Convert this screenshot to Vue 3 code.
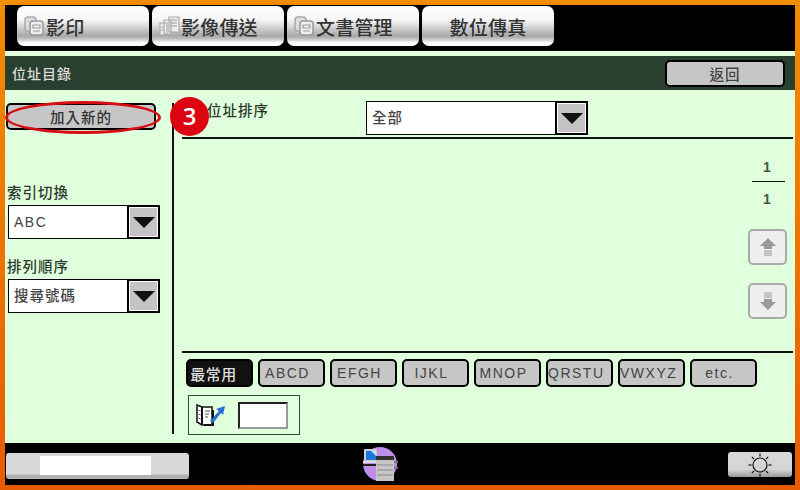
<script setup>
const tabs = [
  { label: '影印', icon: 'single' },
  { label: '影像傳送', icon: 'stack' },
  { label: '文書管理', icon: 'single' },
  { label: '數位傳真', icon: null }
]
const indexTabs = ['最常用', 'ABCD', 'EFGH', 'IJKL', 'MNOP', 'QRSTU', 'VWXYZ', 'etc.']
const rays = [0, 45, 90, 135, 180, 225, 270, 315]
</script>

<template>
  <div class="screen">
    <nav class="top-bar">
      <button v-for="tab in tabs" :key="tab.label" class="tab" :class="{ plain: !tab.icon }">
        <span v-if="tab.icon" class="tab-icon">
          <svg v-if="tab.icon === 'single'" width="20" height="20" viewBox="0 0 20 20">
            <rect x="1" y="1" width="11" height="14" rx="3" fill="#ddd" stroke="#aaa" stroke-width="1.5" />
            <rect x="6" y="5" width="13" height="14" rx="3" fill="#eee" stroke="#999" stroke-width="1.5" />
            <path d="M9 9h7v3H9zM9 15h7" fill="none" stroke="#999" stroke-width="1.2" />
          </svg>
          <svg v-else width="21" height="20" viewBox="0 0 21 20">
            <path d="M1 7h7v12H1zM5 4h7v14H5zM10 1h10v15H10z" fill="#eee" stroke="#aaa" stroke-width="1.2" />
            <path d="M12 4h6M12 7h6M12 10h6M2.500 11h2M2.500 14h2" stroke="#999" />
          </svg>
        </span>
        <span>{{ tab.label }}</span>
      </button>
    </nav>

    <div class="spacer"></div>

    <header class="title-bar">
      <h1>位址目錄</h1>
      <button class="btn back-btn">返回</button>
    </header>

    <div class="body">
      <aside class="side">
        <div class="add-wrap">
          <button class="btn add-btn">加入新的</button>
          <span class="oval"></span>
          <span class="badge">3</span>
        </div>

        <label class="field-label index-label">索引切換</label>
        <div class="select side-select">
          <span class="select-value latin">ABC</span>
          <span class="select-arrow"></span>
        </div>

        <label class="field-label order-label">排列順序</label>
        <div class="select side-select">
          <span class="select-value">搜尋號碼</span>
          <span class="select-arrow"></span>
        </div>
      </aside>

      <main class="main">
        <div class="filter-row">
          <span class="filter-label">位址排序</span>
          <div class="select filter-select">
            <span class="select-value">全部</span>
            <span class="select-arrow"></span>
          </div>
        </div>

        <div class="list-area">
          <div class="pager">
            <div class="page-count">
              <span class="page-num">1</span>
              <span class="page-num page-total">1</span>
            </div>
            <button class="page-btn">
              <svg width="16" height="18" viewBox="0 0 16 18">
                <path d="M8 0l8 8h-4v3H4V8H0z" fill="#999" />
                <path d="M4 13h8M4 15h8M4 17h8" stroke="#999" stroke-width="1.100" />
              </svg>
            </button>
            <button class="page-btn down">
              <svg width="16" height="18" viewBox="0 0 16 18">
                <path d="M8 18l8-8h-4V7H4v3H0z" fill="#999" />
                <path d="M4 1h8M4 3h8M4 5h8" stroke="#999" stroke-width="1.100" />
              </svg>
            </button>
          </div>
        </div>

        <div class="index-tabs">
          <button
            v-for="(item, i) in indexTabs"
            :key="item"
            class="btn index-tab"
            :class="{ active: i === 0 }"
          >{{ item }}</button>
        </div>

        <div class="goto">
          <svg width="32" height="22" viewBox="0 0 32 22">
            <path d="M2 1l5 2h10v18H7l-5-3z" fill="#fff" stroke="#111" stroke-width="1.500" />
            <path d="M7 3v18M9 21h9V6" fill="none" stroke="#111" stroke-width="2" />
            <path d="M3.500 6l2 1M3.500 10l2 1M3.500 14l2 1M10 7h5M10 10h4M10 13h3" stroke="#555" />
            <path d="M15 17l9-10-3-2 9-3-2 9-2-2-8 10z" fill="#2f6bd0" />
          </svg>
          <span class="goto-input"></span>
        </div>
      </main>
    </div>

    <footer class="footer">
      <div class="status-btn"><span class="status-text"></span></div>
      <svg class="machine" width="38" height="35" viewBox="0 0 38 35">
        <circle cx="18" cy="17" r="17" fill="#c08eea" />
        <path d="M2 2h13v12H2z" fill="#ccc" />
        <path d="M4 4h10v9H4z" fill="#1c76e0" />
        <path d="M9 4h5v5z" fill="#bfe0ff" />
        <path d="M1 14h15v2H1z" fill="#ddd" />
        <path d="M1 17h15v2H1z" fill="#222" />
        <path d="M14 9h18v25H14z" fill="#c6c6c6" />
        <path d="M14 9h18v4H14z" fill="#333" />
        <path d="M15 18h16M15 23h16M15 28h16" stroke="#888" />
        <path d="M32 14h4v2h-4zM32 20h4v2h-4z" fill="#777" />
      </svg>
      <button class="light-btn">
        <svg width="24" height="24" viewBox="0 0 24 24">
          <circle cx="12" cy="12" r="7" fill="none" stroke="#111" stroke-width="1.200" />
          <path
            v-for="deg in rays"
            :key="deg"
            d="M12 0.500v3"
            stroke="#111"
            stroke-width="1.200"
            :transform="`rotate(${deg} 12 12)`"
          />
        </svg>
      </button>
    </footer>
  </div>
</template>

<style>
html, body { margin: 0; background: #000; }
</style>

<style scoped>
.screen {
  width: 800px;
  height: 490px;
  box-sizing: border-box;
  padding: 5px;
  display: flex;
  flex-direction: column;
  background: linear-gradient(180deg, #f28c00 0%, #ee7400 50%, #e85c00 100%);
  font-family: "Liberation Sans", "Noto Sans CJK TC", sans-serif;
  color: #333;
  overflow: hidden;
}
button {
  font-family: inherit;
  padding: 0;
  cursor: pointer;
}

.top-bar {
  height: 46px;
  flex: none;
  box-sizing: border-box;
  background: #000;
  padding: 1px 0 0 12px;
  display: flex;
  gap: 3px;
}
.tab {
  width: 132px;
  height: 40px;
  box-sizing: border-box;
  padding-left: 7px;
  border: none;
  border-radius: 7px;
  background: linear-gradient(180deg, #fff 0%, #f6f6f6 35%, #a8a8a8 75%, #c0c0c0 82%, #fff 92%);
  display: flex;
  align-items: center;
  font-size: 19px;
  font-weight: 500;
  letter-spacing: 0.2px;
  color: #333;
}
.tab.plain {
  padding-left: 0;
  justify-content: center;
}
.tab-icon {
  width: 22px;
  flex: none;
  display: flex;
  align-items: center;
}
.spacer {
  height: 5px;
  flex: none;
  background: #e0ffdc;
}

.title-bar {
  height: 34px;
  flex: none;
  box-sizing: border-box;
  background: #293f30;
  display: flex;
  align-items: center;
  justify-content: space-between;
  padding: 0 10px 0 7px;
}
.title-bar h1 {
  margin: 0;
  font-size: 14px;
  font-weight: 500;
  letter-spacing: 1px;
  color: #ddd;
}
.btn {
  box-sizing: border-box;
  border: 2px solid #000;
  border-radius: 5px;
  background: #c6c6c6;
  color: #444;
  font-size: 14.5px;
  font-weight: 500;
  letter-spacing: 1px;
}
.back-btn {
  width: 120px;
  height: 27px;
  padding-left: 0;
}

.body {
  flex: 1;
  display: flex;
  background: #e0ffdc;
  min-height: 0;
}
.side {
  width: 169px;
  height: 331px;
  flex: none;
  box-sizing: border-box;
  margin-top: 13px;
  padding-left: 1px;
  border-right: 2px solid #111;
}
.add-wrap {
  position: relative;
  width: 150px;
  height: 27px;
}
.add-btn {
  width: 100%;
  height: 100%;
  color: #333;
}
.oval {
  position: absolute;
  left: -1px;
  top: -2px;
  width: 156px;
  height: 33px;
  box-sizing: border-box;
  border: 3px solid #d80c14;
  border-radius: 50%;
}
.badge {
  position: absolute;
  left: 164px;
  top: -6px;
  width: 39px;
  height: 39px;
  border-radius: 50%;
  background: #dc0410;
  color: #fff;
  font-family: "Open Sans", sans-serif;
  font-size: 24px;
  font-weight: 600;
  line-height: 38px;
  text-align: center;
}

.field-label {
  display: block;
  font-size: 14.5px;
  font-weight: 500;
  line-height: 18px;
  letter-spacing: 1px;
  padding-left: 1px;
  color: #2c3a2c;
}
.index-label { margin-top: 54px; }
.order-label { margin-top: 19px; }

.select {
  display: flex;
  box-sizing: border-box;
  background: #fff;
  border: 1px solid #000;
}
.side-select {
  width: 152px;
  height: 34px;
  margin: 3px 0 0 2px;
}
.filter-select {
  width: 222px;
  height: 34px;
}
.select-value {
  flex: 1;
  padding-left: 5px;
  font-size: 14.5px;
  font-weight: 500;
  line-height: 32px;
  letter-spacing: 1px;
  color: #444;
}
.latin { letter-spacing: 1.5px; font-size: 14px; }
.select-arrow {
  position: relative;
  width: 33px;
  flex: none;
  box-sizing: border-box;
  border: 2px solid #000;
  margin: -1px -1px -1px 0;
  background: #c4c4c4;
  box-shadow: inset 0 0 0 1px #fff;
}
.select-arrow::after {
  content: "";
  position: absolute;
  left: 4px;
  top: 10px;
  border-left: 11px solid transparent;
  border-right: 11px solid transparent;
  border-top: 11px solid #111;
}

.main {
  flex: 1;
  display: flex;
  flex-direction: column;
  box-sizing: border-box;
  padding: 11px 2px 0 8px;
  min-width: 0;
}
.filter-row {
  height: 38px;
  flex: none;
  box-sizing: border-box;
  display: flex;
  border-bottom: 2px solid #111;
}
.filter-label {
  width: 184px;
  flex: none;
  box-sizing: border-box;
  padding-left: 25px;
  font-size: 14.5px;
  font-weight: 500;
  line-height: 20px;
  letter-spacing: 1px;
  color: #2c3a2c;
}
.list-area {
  height: 214px;
  flex: none;
  box-sizing: border-box;
  display: flex;
  justify-content: flex-end;
  border-bottom: 2px solid #111;
}
.pager {
  width: 39px;
  margin-right: 6px;
  padding-top: 20px;
  display: flex;
  flex-direction: column;
  align-items: center;
}
.page-count {
  width: 33px;
  margin-left: 2px;
  margin-bottom: 22px;
  display: flex;
  flex-direction: column;
  align-items: center;
}
.page-num {
  font-size: 14px;
  line-height: 16px;
  font-weight: 700;
  color: #3a5a42;
  padding-right: 3px;
}
.page-total {
  width: 100%;
  box-sizing: border-box;
  margin-top: 6px;
  padding-top: 9px;
  border-top: 1px solid #111;
  text-align: center;
}
.page-btn {
  width: 39px;
  height: 36px;
  box-sizing: border-box;
  border: 2px solid #aaa;
  border-radius: 5px;
  background: #eee;
  display: flex;
  align-items: center;
  justify-content: center;
}
.page-btn.down { margin-top: 18px; }

.index-tabs {
  flex: none;
  display: flex;
  gap: 5px;
  margin-top: 6px;
  padding-left: 4px;
}
.index-tab {
  width: 67px;
  height: 28px;
  padding-right: 8px;
  font-size: 14px;
  letter-spacing: 1.5px;
  white-space: nowrap;
}
.index-tab.active {
  background: #111;
  color: #ddd;
  padding-right: 12px;
  font-size: 15px;
  letter-spacing: 0.5px;
}

.goto {
  width: 112px;
  height: 40px;
  flex: none;
  box-sizing: border-box;
  margin: 8px 0 0 6px;
  border: 1px solid #29503a;
  display: flex;
  align-items: center;
  padding-left: 6px;
}
.goto-input {
  width: 50px;
  height: 27px;
  box-sizing: border-box;
  margin-left: 11px;
  background: #fff;
  border: 2px solid;
  border-color: #222 #999 #999 #222;
}

.footer {
  height: 42px;
  flex: none;
  background: #000;
  display: flex;
  align-items: center;
  padding: 0 3px 0 1px;
}
.status-btn {
  width: 183px;
  height: 26px;
  margin-top: 3px;
  box-sizing: border-box;
  padding: 3px 0 0 34px;
  border-radius: 3px;
  background: linear-gradient(180deg, #d8d8d8 0%, #d8d8d8 80%, #aaa 88%, #bbb 100%);
}
.status-text {
  display: block;
  width: 111px;
  height: 19px;
  background: #fff;
}
.machine {
  flex: none;
  margin: 1px 0 0 173px;
}
.light-btn {
  width: 64px;
  height: 25px;
  margin: 1px 0 0 auto;
  border: none;
  border-radius: 3px;
  background: linear-gradient(180deg, #d8d8d8 0%, #d4d4d4 70%, #999 100%);
  display: flex;
  align-items: center;
  justify-content: center;
}
</style>
